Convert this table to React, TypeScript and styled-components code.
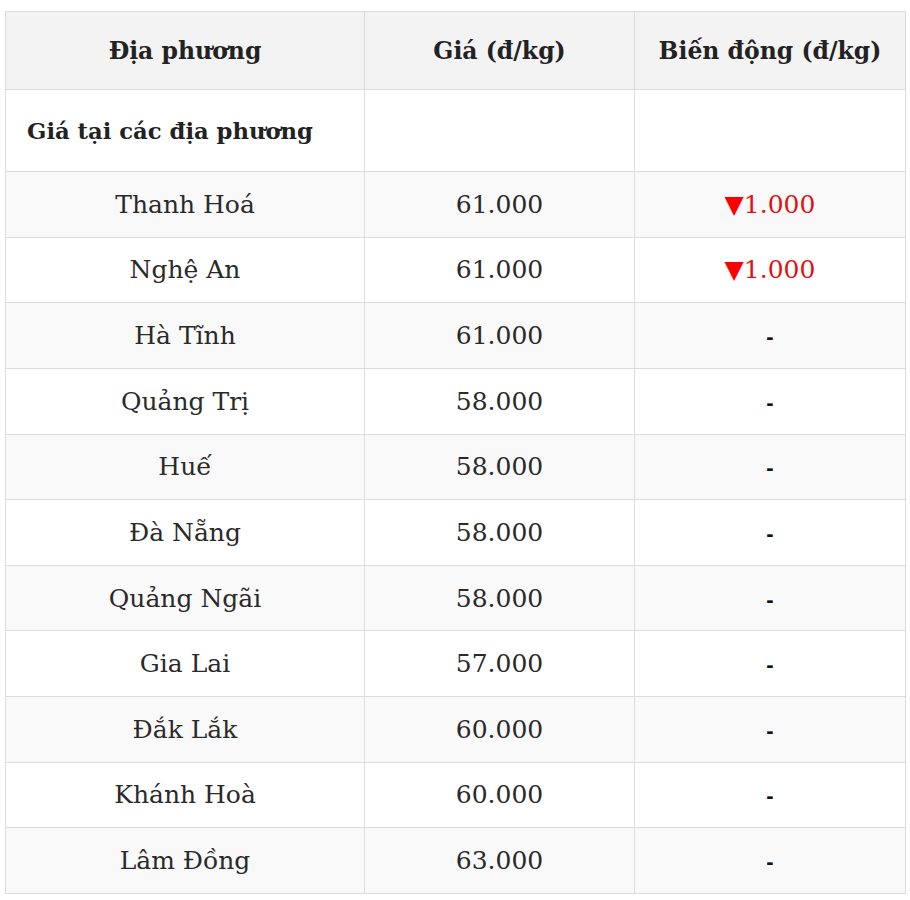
import React from "react";
import styled, { createGlobalStyle } from "styled-components";

const Global = createGlobalStyle`
  html, body { margin: 0; padding: 0; background: #fff; }
  body { font-family: "DejaVu Serif", "Liberation Serif", serif; color: #222; }
`;

const Wrap = styled.div`
  padding: 11px 5px 0 5px;
  width: 900px;
`;

const Table = styled.table`
  width: 900px;
  border-collapse: collapse;
  table-layout: fixed;
  font-size: 25px;
`;

const HeadCell = styled.th`
  height: 78px;
  padding: 0 12px;
  background: #f3f3f3;
  border: 1px solid #dcdcdc;
  font-weight: 700;
  font-size: 23.5px;
  text-align: center;
  color: #222;
  box-sizing: border-box;
`;

const Row = styled.tr<{ $shade?: boolean }>`
  background: ${(p) => (p.$shade ? "#f9f9f9" : "#fff")};
`;

const Cell = styled.td<{ $tall?: boolean }>`
  height: ${(p) => (p.$tall ? "82px" : "65.64px")};
  padding: 0 12px;
  border: 1px solid #dcdcdc;
  text-align: center;
  color: #2a2a2a;
  box-sizing: border-box;
`;

const SectionCell = styled(Cell)`
  text-align: left;
  padding-left: 21px;
  font-weight: 700;
  font-size: 22.7px;
  color: #222;
`;

const Down = styled.span`
  color: #dc1414;
`;

const Arrow = styled.span`
  color: #f00;
  font-family: "DejaVu Sans", sans-serif;
  font-size: 25px;
`;

const Dash = styled.span`
  font-family: "Liberation Sans", sans-serif;
  font-weight: 700;
  color: #111;
  font-size: 22px;
`;

type Item = { name: string; price: string; change: number };

const rows: Item[] = [
  { name: "Thanh Hoá", price: "61.000", change: -1000 },
  { name: "Nghệ An", price: "61.000", change: -1000 },
  { name: "Hà Tĩnh", price: "61.000", change: 0 },
  { name: "Quảng Trị", price: "58.000", change: 0 },
  { name: "Huế", price: "58.000", change: 0 },
  { name: "Đà Nẵng", price: "58.000", change: 0 },
  { name: "Quảng Ngãi", price: "58.000", change: 0 },
  { name: "Gia Lai", price: "57.000", change: 0 },
  { name: "Đắk Lắk", price: "60.000", change: 0 },
  { name: "Khánh Hoà", price: "60.000", change: 0 },
  { name: "Lâm Đồng", price: "63.000", change: 0 },
];

export default function App() {
  return (
    <Wrap>
      <Global />
      <Table>
        <colgroup>
          <col style={{ width: 359 }} />
          <col style={{ width: 270 }} />
          <col style={{ width: 271 }} />
        </colgroup>
        <thead>
          <tr>
            <HeadCell>Địa phương</HeadCell>
            <HeadCell>Giá (đ/kg)</HeadCell>
            <HeadCell>Biến động (đ/kg)</HeadCell>
          </tr>
        </thead>
        <tbody>
          <Row>
            <SectionCell $tall>Giá tại các địa phương</SectionCell>
            <Cell $tall />
            <Cell $tall />
          </Row>
          {rows.map((r, i) => (
            <Row key={r.name} $shade={i % 2 === 0}>
              <Cell>{r.name}</Cell>
              <Cell>{r.price}</Cell>
              <Cell>
                {r.change < 0 ? (
                  <Down>
                    <Arrow>▼</Arrow>1.000
                  </Down>
                ) : (
                  <Dash>-</Dash>
                )}
              </Cell>
            </Row>
          ))}
        </tbody>
      </Table>
    </Wrap>
  );
}
